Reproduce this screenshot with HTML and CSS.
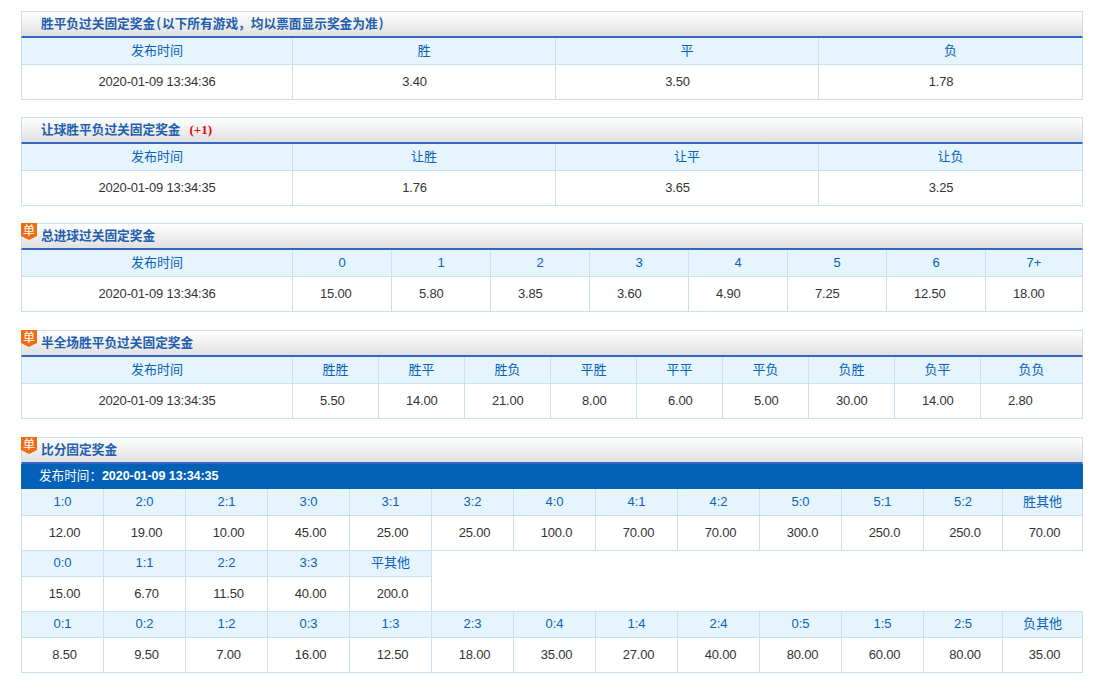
FILE: index.html
```html
<!DOCTYPE html>
<html lang="zh-CN">
<head>
<meta charset="utf-8">
<title>固定奖金</title>
<link rel="stylesheet" href="styles.css">
</head>
<body>
<section class="panel">
  <h2 class="panel-title">胜平负过关固定奖金<span class="paren">(</span>以下所有游戏，均以票面显示奖金为准<span class="paren">)</span></h2>
  <table class="odds three">
    <colgroup><col class="c-time"><col class="c-263"><col class="c-263"><col class="c-264"></colgroup>
    <tr><th class="cjk">发布时间</th><th class="cjk">胜</th><th class="cjk">平</th><th class="cjk">负</th></tr>
    <tr><td class="time">2020-01-09 13:34:36</td><td>3.40</td><td>3.50</td><td>1.78</td></tr>
  </table>
</section>
<section class="panel">
  <h2 class="panel-title">让球胜平负过关固定奖金 <span class="handicap">(+1)</span></h2>
  <table class="odds three">
    <colgroup><col class="c-time"><col class="c-263"><col class="c-263"><col class="c-264"></colgroup>
    <tr><th class="cjk">发布时间</th><th class="cjk">让胜</th><th class="cjk">让平</th><th class="cjk">让负</th></tr>
    <tr><td class="time">2020-01-09 13:34:35</td><td>1.76</td><td>3.65</td><td>3.25</td></tr>
  </table>
</section>
<section class="panel loose">
  <span class="badge">单</span>
  <h2 class="panel-title">总进球过关固定奖金</h2>
  <table class="odds goals">
    <colgroup><col class="c-time"><col class="c-99"><col class="c-99"><col class="c-99"><col class="c-99"><col class="c-99"><col class="c-99"><col class="c-99"><col class="c-97"></colgroup>
    <tr><th class="cjk">发布时间</th><th>0</th><th>1</th><th>2</th><th>3</th><th>4</th><th>5</th><th>6</th><th>7+</th></tr>
    <tr><td class="time">2020-01-09 13:34:36</td><td>15.00</td><td>5.80</td><td>3.85</td><td>3.60</td><td>4.90</td><td>7.25</td><td>12.50</td><td>18.00</td></tr>
  </table>
</section>
<section class="panel loose">
  <span class="badge">单</span>
  <h2 class="panel-title">半全场胜平负过关固定奖金</h2>
  <table class="odds halves">
    <colgroup><col class="c-time"><col class="c-86"><col class="c-86"><col class="c-86"><col class="c-86"><col class="c-86"><col class="c-86"><col class="c-86"><col class="c-86"><col class="c-102"></colgroup>
    <tr><th class="cjk">发布时间</th><th class="cjk">胜胜</th><th class="cjk">胜平</th><th class="cjk">胜负</th><th class="cjk">平胜</th><th class="cjk">平平</th><th class="cjk">平负</th><th class="cjk">负胜</th><th class="cjk">负平</th><th class="cjk">负负</th></tr>
    <tr><td class="time">2020-01-09 13:34:35</td><td>5.50</td><td>14.00</td><td>21.00</td><td class="short">8.00</td><td class="short">6.00</td><td class="short">5.00</td><td>30.00</td><td>14.00</td><td>2.80</td></tr>
  </table>
</section>
<section class="panel">
  <span class="badge">单</span>
  <h2 class="panel-title">比分固定奖金</h2>
  <div class="publish">发布时间：<span class="publish-date">2020-01-09 13:34:35</span></div>
  <table class="odds scores">
    <colgroup><col class="c-82"><col class="c-82"><col class="c-82"><col class="c-82"><col class="c-82"><col class="c-82"><col class="c-82"><col class="c-82"><col class="c-82"><col class="c-82"><col class="c-82"><col class="c-79"><col class="c-80"></colgroup>
    <tr><th>1:0</th><th>2:0</th><th>2:1</th><th>3:0</th><th>3:1</th><th>3:2</th><th>4:0</th><th>4:1</th><th>4:2</th><th>5:0</th><th>5:1</th><th>5:2</th><th class="cjk">胜其他</th></tr>
    <tr><td>12.00</td><td>19.00</td><td>10.00</td><td>45.00</td><td>25.00</td><td>25.00</td><td>100.0</td><td>70.00</td><td>70.00</td><td>300.0</td><td>250.0</td><td>250.0</td><td>70.00</td></tr>
    <tr><th>0:0</th><th>1:1</th><th>2:2</th><th>3:3</th><th class="cjk">平其他</th><td class="blank" colspan="8" rowspan="2"></td></tr>
    <tr><td>15.00</td><td>6.70</td><td>11.50</td><td>40.00</td><td>200.0</td></tr>
    <tr><th>0:1</th><th>0:2</th><th>1:2</th><th>0:3</th><th>1:3</th><th>2:3</th><th>0:4</th><th>1:4</th><th>2:4</th><th>0:5</th><th>1:5</th><th>2:5</th><th class="cjk">负其他</th></tr>
    <tr><td>8.50</td><td>9.50</td><td>7.00</td><td>16.00</td><td>12.50</td><td>18.00</td><td>35.00</td><td>27.00</td><td>40.00</td><td>80.00</td><td>60.00</td><td>80.00</td><td>35.00</td></tr>
  </table>
</section>
</body>
</html>
```
FILE: styles.css
```css
html, body {
  background: #fff;
}
body {
  margin: 0;
  padding: 11px 21px 0;
  font-family: "Liberation Sans", "Noto Sans CJK SC", sans-serif;
  font-size: 13px;
  color: #333;
}
.panel {
  position: relative;
  width: 1062px;
  margin-bottom: 17px;
}
.panel.loose {
  margin-bottom: 18px;
}
.panel-title {
  box-sizing: border-box;
  height: 27px;
  margin: 0;
  padding-left: 19px;
  border: 1px solid #c9e0ee;
  border-bottom: 2px solid #3566c2;
  background: linear-gradient(#fff, #e0e0e0);
  font-family: "Noto Sans CJK SC", sans-serif;
  font-size: 12.7px;
  line-height: 22px;
  font-weight: 700;
  color: #1f5fae;
}
.paren {
  margin: 0 1px;
}
.handicap {
  margin-left: 6px;
  font-family: "Liberation Serif", serif;
  font-size: 13px;
  color: #e60012;
}
.badge {
  position: absolute;
  left: 0;
  top: 0;
  width: 16px;
  height: 17px;
  box-sizing: border-box;
  background: #f26a12;
  clip-path: polygon(0 0, 100% 0, 100% 76%, 50% 100%, 0 76%);
  font-family: "Noto Sans CJK SC", sans-serif;
  font-size: 12px;
  line-height: 13px;
  text-align: center;
  color: #fff;
}
.publish {
  height: 25px;
  padding-left: 18px;
  background: #0461b8;
  font-size: 12.6px;
  line-height: 24px;
  color: #fff;
}
.publish-date {
  font-weight: 700;
  letter-spacing: -0.1px;
}
.odds {
  width: 1062px;
  table-layout: fixed;
  border-collapse: separate;
  border-spacing: 0;
  border-left: 1px solid #c9e0ee;
}
.odds th,
.odds td {
  box-sizing: border-box;
  padding: 0 0 2px;
  border-right: 1px solid #c9e0ee;
  border-bottom: 1px solid #c9e0ee;
  text-align: center;
}
.odds th {
  height: 26px;
  background: #e5f4fd;
  font-weight: 400;
  color: #0a62b8;
}
.odds th.cjk {
  padding-bottom: 4px;
}
.odds tr:first-child th {
  height: 27px;
}
.odds td {
  height: 35px;
  letter-spacing: -0.2px;
}
.three td {
  padding-right: 19px;
}
.goals td,
.halves td {
  padding-left: 27px;
  text-align: left;
}
.halves td.short {
  padding-left: 31px;
}
.scores td {
  padding-left: 4px;
}
.odds td.time {
  padding-left: 0;
  padding-right: 0;
  text-align: center;
}
.odds td.blank {
  border-right: 0;
}
.c-time { width: 271px; }
.c-263 { width: 263px; }
.c-264 { width: 264px; }
.c-102 { width: 102px; }
.c-99 { width: 99px; }
.c-97 { width: 97px; }
.c-86 { width: 86px; }
.c-82 { width: 82px; }
.c-80 { width: 80px; }
.c-79 { width: 79px; }
```
